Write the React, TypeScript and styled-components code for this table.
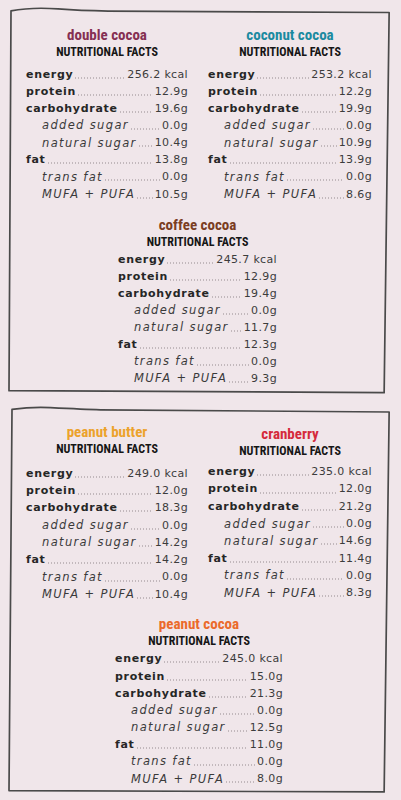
import React from "react";
import styled, { createGlobalStyle } from "styled-components";

const GlobalStyle = createGlobalStyle`
  html, body { margin: 0; padding: 0; background: #f0e6ea; }
  body { font-family: "DejaVu Sans", "Liberation Sans", sans-serif; }
`;

type Flavor = { name: string; color: string; values: string[] };

const ROWS: { label: string; sub: boolean }[] = [
  { label: "energy", sub: false },
  { label: "protein", sub: false },
  { label: "carbohydrate", sub: false },
  { label: "added sugar", sub: true },
  { label: "natural sugar", sub: true },
  { label: "fat", sub: false },
  { label: "trans fat", sub: true },
  { label: "MUFA + PUFA", sub: true },
];

const Page = styled.div`
  width: 401px;
  padding: 7px 0 6px 8px;
  box-sizing: border-box;
  display: flex;
  flex-direction: column;
  gap: 11px;
`;

const Frame = styled.section<{ $top: number }>`
  position: relative;
  width: 385px;
  box-sizing: border-box;
  padding: ${(p) => p.$top}px 0 6px;
  display: flex;
  flex-direction: column;
`;

const FrameLine = styled.svg`
  position: absolute;
  inset: 0;
  width: 100%;
  height: 100%;
  overflow: visible;
  pointer-events: none;
`;

const PairGrid = styled.div`
  display: grid;
  grid-template-columns: 162px 164px;
  column-gap: 20px;
  padding-left: 18px;
`;

const Section = styled.div<{ $left?: number; $width?: number; $top?: number }>`
  display: flex;
  flex-direction: column;
  ${(p) => (p.$width ? `width: ${p.$width}px;` : "")}
  ${(p) => (p.$left !== undefined ? `margin-left: ${p.$left}px;` : "")}
  ${(p) => (p.$top ? `margin-top: ${p.$top}px;` : "")}
`;

const FlavorTitle = styled.h2<{ $color: string; $shift?: number }>`
  margin: 0;
  position: relative;
  top: ${(p) => p.$shift || 0}px;
  text-align: center;
  font-family: "Liberation Sans Narrow", "Roboto Condensed", "DejaVu Sans Condensed", "Open Sans Condensed", "Liberation Sans", sans-serif;
  font-stretch: condensed;
  font-weight: 700;
  font-size: 15px;
  line-height: 17px;
  color: ${(p) => p.$color};
`;

const FactsHeading = styled.h3<{ $shift?: number }>`
  margin: 0;
  position: relative;
  top: ${(p) => p.$shift || 0}px;
  text-align: center;
  font-family: "Liberation Sans Narrow", "Roboto Condensed", "DejaVu Sans Condensed", "Open Sans Condensed", "Liberation Sans", sans-serif;
  font-stretch: condensed;
  font-weight: 700;
  font-size: 12px;
  line-height: 17px;
  color: #161616;
`;

const RowList = styled.div<{ $gap: number; $rowH: number }>`
  margin-top: ${(p) => p.$gap}px;
  display: grid;
  grid-auto-rows: ${(p) => p.$rowH}px;
`;

const Row = styled.div<{ $sub: boolean }>`
  display: flex;
  align-items: center;
  padding-left: ${(p) => (p.$sub ? 16 : 0)}px;
  font-size: 11px;
  letter-spacing: 0.35px;
  white-space: nowrap;
`;

const Label = styled.span<{ $sub: boolean }>`
  color: ${(p) => (p.$sub ? "#3a3a3a" : "#262626")};
  font-style: ${(p) => (p.$sub ? "italic" : "normal")};
  font-weight: ${(p) => (p.$sub ? 400 : 700)};
  font-size: ${(p) => (p.$sub ? 11.5 : 11)}px;
  letter-spacing: ${(p) => (p.$sub ? 1.35 : 0.7)}px;
`;

const Leader = styled.span`
  flex: 1;
  align-self: stretch;
  margin: 0 2px 0 1px;
  background-image: radial-gradient(circle, #c2b8bc 0.6px, transparent 0.9px);
  background-size: 3px 2px;
  background-repeat: repeat-x;
  background-position: 0 calc(100% - 4px);
`;

const Value = styled.span`
  color: #3c3c3c;
`;

function FrameDrawing({ d }: { d: string }) {
  return (
    <FrameLine viewBox="0 0 100 100" preserveAspectRatio="none">
      <path
        d={d}
        fill="none"
        stroke="#4a4a4a"
        strokeWidth={1.7}
        strokeLinejoin="round"
        vectorEffect="non-scaling-stroke"
      />
    </FrameLine>
  );
}

function Facts({
  flavor,
  gap,
  rowH,
  titleShift,
}: {
  flavor: Flavor;
  gap: number;
  rowH: number;
  titleShift?: number;
}) {
  return (
    <>
      <FlavorTitle $color={flavor.color} $shift={titleShift}>
        {flavor.name}
      </FlavorTitle>
      <FactsHeading $shift={titleShift}>NUTRITIONAL FACTS</FactsHeading>
      <RowList $gap={gap} $rowH={rowH}>
        {ROWS.map((r, i) => (
          <Row key={r.label} $sub={r.sub}>
            <Label $sub={r.sub}>{r.label}</Label>
            <Leader />
            <Value>{flavor.values[i]}</Value>
          </Row>
        ))}
      </RowList>
    </>
  );
}

const doubleCocoa: Flavor = {
  name: "double cocoa",
  color: "#852f52",
  values: ["256.2 kcal", "12.9g", "19.6g", "0.0g", "10.4g", "13.8g", "0.0g", "10.5g"],
};
const coconutCocoa: Flavor = {
  name: "coconut cocoa",
  color: "#1b8aa0",
  values: ["253.2 kcal", "12.2g", "19.9g", "0.0g", "10.9g", "13.9g", "0.0g", "8.6g"],
};
const coffeeCocoa: Flavor = {
  name: "coffee cocoa",
  color: "#7a3d22",
  values: ["245.7 kcal", "12.9g", "19.4g", "0.0g", "11.7g", "12.3g", "0.0g", "9.3g"],
};
const peanutButter: Flavor = {
  name: "peanut butter",
  color: "#eca22b",
  values: ["249.0 kcal", "12.0g", "18.3g", "0.0g", "14.2g", "14.2g", "0.0g", "10.4g"],
};
const cranberry: Flavor = {
  name: "cranberry",
  color: "#d52a3b",
  values: ["235.0 kcal", "12.0g", "21.2g", "0.0g", "14.6g", "11.4g", "0.0g", "8.3g"],
};
const peanutCocoa: Flavor = {
  name: "peanut cocoa",
  color: "#eb6a2b",
  values: ["245.0 kcal", "15.0g", "21.3g", "0.0g", "12.5g", "11.0g", "0.0g", "8.0g"],
};

export default function App() {
  return (
    <>
      <GlobalStyle />
      <Page>
        <Frame $top={19.5}>
          <FrameDrawing d="M 0.78 1.0 C 4 0.4 9 0.2 13 0.5 C 18 0.9 22 1.0 26 1.05 L 99 1.42 L 97.7 99.9 L 0.26 99.4 Z" />
          <PairGrid>
            <Section>
              <Facts flavor={doubleCocoa} gap={5} rowH={17.15} />
            </Section>
            <Section>
              <Facts flavor={coconutCocoa} gap={5} rowH={17.15} />
            </Section>
          </PairGrid>
          <Section $left={110} $width={159} $top={14}>
            <Facts flavor={coffeeCocoa} gap={0} rowH={17.05} />
          </Section>
        </Frame>
        <Frame $top={20}>
          <FrameDrawing d="M 1.04 1.4 C 4 1.0 8 0.8 11 0.95 C 16 1.2 20 1.4 24 1.5 L 99 2.05 L 97.7 99.7 L 0.26 99.35 Z" />
          <PairGrid>
            <Section>
              <Facts flavor={peanutButter} gap={6.5} rowH={17.3} />
            </Section>
            <Section>
              <Facts flavor={cranberry} gap={5} rowH={17.3} titleShift={1.5} />
            </Section>
          </PairGrid>
          <Section $left={107} $width={168} $top={13.5}>
            <Facts flavor={peanutCocoa} gap={0} rowH={17.1} />
          </Section>
        </Frame>
      </Page>
    </>
  );
}
